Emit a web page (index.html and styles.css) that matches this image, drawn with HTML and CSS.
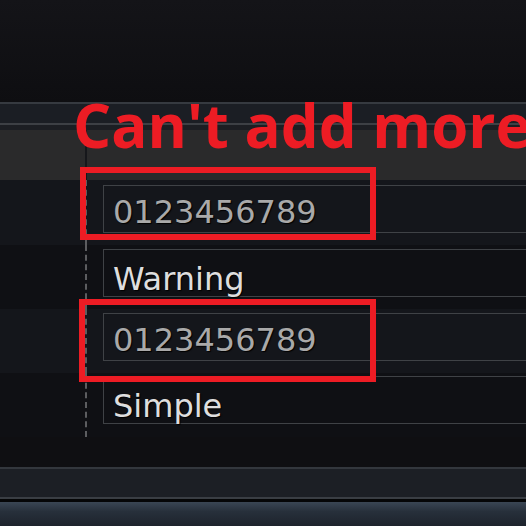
FILE: index.html
```html
<!DOCTYPE html>
<html lang="en">
<head>
  <meta charset="UTF-8">
  <title>Can't add more</title>
  <link rel="stylesheet" href="styles.css">
</head>
<body>
  <div class="screen">
    <div class="topbar"></div>

    <div class="toolbar"></div>
    <div class="spacer"></div>

    <div class="header">
      <div class="header-left"></div>
      <div class="header-right"></div>
    </div>

    <div class="rows">
      <div class="row light">
        <div class="cell-left"></div>
        <div class="cell-right">
          <div class="field"><span class="value">0123456789</span></div>
        </div>
      </div>
      <div class="row">
        <div class="cell-left"></div>
        <div class="cell-right">
          <div class="field"><span class="label">Warning</span></div>
        </div>
      </div>
      <div class="row light">
        <div class="cell-left"></div>
        <div class="cell-right">
          <div class="field"><span class="value">0123456789</span></div>
        </div>
      </div>
      <div class="row last">
        <div class="cell-left"></div>
        <div class="cell-right">
          <div class="field"><span class="label">Simple</span></div>
        </div>
      </div>
    </div>

    <div class="empty"></div>

    <footer>
      <div class="statusbar"></div>
      <div class="taskbar"></div>
    </footer>

    <!-- annotation drawn over the screenshot -->
    <div class="note">Can't add more</div>
    <div class="mark mark-one"></div>
    <div class="mark mark-two"></div>
  </div>
</body>
</html>
```

FILE: styles.css
```css
body {
  margin: 0;
  padding: 0;
  background-color: #0f0f12;
  font-family: "DejaVu Sans", sans-serif;
  overflow: hidden;
}
.screen {
  position: relative;
  width: 526px;
  height: 526px;
  overflow: hidden;
  display: flex;
  flex-direction: column;
}
.topbar {
  height: 102px;
  background: linear-gradient(#141418, #0e0e11);
  flex-shrink: 0;
}
.toolbar {
  height: 19px;
  background: #1b1e24;
  border-top: 2px solid #363a40;
  border-bottom: 2px solid #3d4045;
  flex-shrink: 0;
}
.spacer {
  height: 5px;
  background: #1c1e23;
  flex-shrink: 0;
}
.header {
  height: 50px;
  display: flex;
  background: #2a2a2b;
  flex-shrink: 0;
}
.header-left {
  width: 85px;
}
.header-right {
  flex: 1;
  border-left: 2px solid #16171b;
}
.rows {
  display: flex;
  flex-direction: column;
  flex-shrink: 0;
}
.row {
  height: 64px;
  display: flex;
  background: #0f1014;
}
.row.light {
  background: #14161b;
}
.row:first-child {
  height: 65px;
}
.cell-left {
  width: 85px;
}
.cell-right {
  flex: 1;
  border-left: 2px dashed #5c5d60;
  padding: 4px 0 0 16px;
}
.row:first-child .cell-right {
  padding-top: 5px;
}
.row.last .cell-right {
  padding-top: 3px;
}
.field {
  height: 48px;
  box-sizing: border-box;
  border: 1px solid #3f4246;
  border-right: none;
  margin-right: -4px;
  padding-left: 9px;
  font-size: 32px;
  line-height: 32px;
  text-shadow: 1px 1px 1px #000;
}
.value {
  display: block;
  padding-top: 10px;
  color: #a9a9a9;
}
.label {
  display: block;
  padding-top: 13px;
  color: #dedede;
}
.empty {
  height: 30px;
  flex-shrink: 0;
}
footer {
  flex: 1;
  display: flex;
  flex-direction: column;
}
.statusbar {
  height: 28px;
  background: #1c1f25;
  border-top: 2px solid #33373d;
  border-bottom: 2px solid #3a3e44;
}
.taskbar {
  flex: 1;
  border-top: 3px solid #050607;
  background: linear-gradient(#3a4654, #27303b 40%, #1d232c);
}
.note {
  position: absolute;
  left: 73px;
  top: 95px;
  font-family: "Open Sans", sans-serif;
  font-weight: 700;
  font-size: 60px;
  line-height: 1;
  color: #ed1c24;
  white-space: nowrap;
}
.mark {
  position: absolute;
  border: 6px solid #ed1c24;
}
.mark-one {
  left: 80px;
  top: 167px;
  width: 284px;
  height: 61px;
}
.mark-two {
  left: 79px;
  top: 299px;
  width: 285px;
  height: 71px;
}
```
